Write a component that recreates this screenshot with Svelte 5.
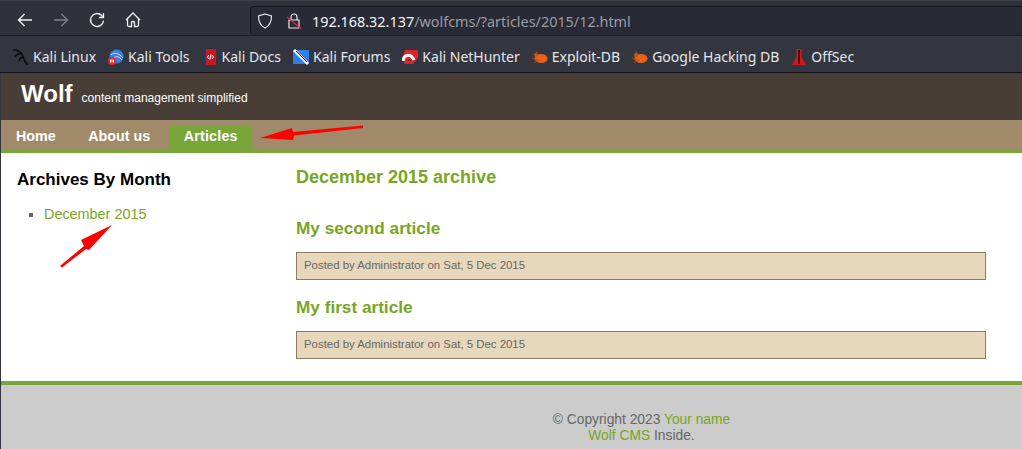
<script lang="ts">
	const posts = ['My second article', 'My first article'];
</script>

<div class="window">
	<div class="toolbar">
		<div class="nav-buttons">
			<svg viewBox="0 0 16 16" class="tb"><path d="M15 8H1.500M7.500 2 1.500 8l6 6" /></svg>
			<svg viewBox="0 0 16 16" class="tb off"><path d="M1 8h13.500M8.500 2l6 6-6 6" /></svg>
			<svg viewBox="0 0 16 16" class="tb"><path d="M14.500 8.500a6.500 6.500 0 1 1-2-5.200L14.500 5.500M14.500 1v4.500H10" /></svg>
			<svg viewBox="0 0 16 16" class="tb"><path d="M1 8 8 1 15 8M2.500 6.500V13a1.500 1.500 0 0 0 1.500 1.500h2.500V10.500a1 1 0 0 1 1-1h1a1 1 0 0 1 1 1v4H12a1.500 1.500 0 0 0 1.500-1.500V6.500" /></svg>
		</div>
		<div class="urlbar">
			<svg viewBox="0 0 16 16" class="ub"><path d="M8 1 14.500 3C14.500 9 12.500 12.800 8 15 3.500 12.800 1.500 9 1.500 3Z" /></svg>
			<svg viewBox="0 0 16 16" class="ub lock">
				<path d="M5 7V4a3 3 0 0 1 6 0V7M3 7h10v8H3Z" />
				<path class="slash" d="M1 4 15 15.500" />
			</svg>
			<span class="url"><b>192.168.32.137</b>/wolfcms/?articles/2015/12.html</span>
		</div>
	</div>

	<div class="bookmarks">
		<span class="bm">
			<svg viewBox="0 0 16 16"><path class="kali" d="M0 1C5 1 8 3 9.500 6 11 9 10 12 15 16M9 5C7 4 3 5 2 8M10 8.500C8 8 6 9.500 7 12" /></svg>
			Kali Linux
		</span>
		<span class="bm">
			<svg viewBox="0 0 16 16"><circle cx="8.500" cy="7.500" r="7" fill="#3b7de0" /><path d="M3 6C6 3 11 4 15 9M6 9c2-2 5-2 8 2" stroke="#cfe0fa" fill="none" /><circle cx="4" cy="12" r="4" fill="#e8262c" /><path d="M2.500 10.500v3M4 10.500v3M5.500 10.500v3" stroke="#fff" /></svg>
			Kali Tools
		</span>
		<span class="bm">
			<svg viewBox="0 0 16 16"><rect x="2" y="0" width="12" height="16" fill="#c8171d" /><rect x="2" y="0" width="2" height="16" fill="#23366e" /><path d="M7 6 5.500 8 7 10M10 6l1.500 2L10 10M9 5.500 8 10.500" stroke="#fff" fill="none" /></svg>
			Kali Docs
		</span>
		<span class="bm">
			<svg viewBox="0 0 16 16"><rect x="0" y="1" width="16" height="14" rx="1" fill="#2f80e4" /><path d="M1 1 15 15" stroke="#fff" stroke-width="3" /><path d="M3 2 14 13" stroke="#27303a" /></svg>
			Kali Forums
		</span>
		<span class="bm">
			<svg viewBox="0 0 16 16"><path d="M3 1H16V9L11 15H3L0 9Z" fill="#d8262c" /><path d="M1 12C2 5 9 4 12 11" stroke="#fff" stroke-width="3" fill="none" /><path d="M6 12c1-1.500 2-1.500 3 0" stroke="#27303a" fill="none" /></svg>
			Kali NetHunter
		</span>
		<span class="bm">
			<svg viewBox="0 0 16 16"><ellipse cx="9" cy="9.500" rx="6.500" ry="4.500" fill="#e8621a" /><circle cx="4" cy="6" r="2" fill="#c9541a" /><path d="M0 9 5 11M2 14 7 11M4 2 6 6" stroke="#a8481a" /></svg>
			Exploit-DB
		</span>
		<span class="bm">
			<svg viewBox="0 0 16 16"><ellipse cx="9" cy="9.500" rx="6.500" ry="4.500" fill="#e8621a" /><circle cx="4" cy="6" r="2" fill="#c9541a" /><path d="M0 9 5 11M2 14 7 11M4 2 6 6" stroke="#a8481a" /></svg>
			Google Hacking DB
		</span>
		<span class="bm">
			<svg viewBox="0 0 16 16"><path d="M5.500 0H10.500V8L15 16H1L5.500 8Z" fill="#d0191f" /><path d="M8 1V15" stroke="#3a0608" stroke-width="1.800" /></svg>
			OffSec
		</span>
	</div>

	<div class="page">
		<header class="site-header">
			<h1>Wolf</h1>
			<span class="tagline">content management simplified</span>
		</header>

		<nav class="site-nav">
			<a href="#home">Home</a>
			<a href="#about">About us</a>
			<a href="#articles" class="current">Articles</a>
		</nav>

		<main class="content">
			<aside class="sidebar">
				<h3>Archives By Month</h3>
				<ul>
					<li><a href="#dec">December 2015</a></li>
				</ul>
			</aside>
			<section class="articles">
				<h2>December 2015 archive</h2>
				{#each posts as post}
					<h3><a href="#post">{post}</a></h3>
					<p class="info">Posted by Administrator on Sat, 5 Dec 2015</p>
				{/each}
			</section>
		</main>

		<footer class="site-footer">
			<p>© Copyright 2023 <a href="#you">Your name</a><br /><a href="#wolf">Wolf CMS</a> Inside.</p>
		</footer>
	</div>

	<!-- hand-drawn annotations on top of the page -->
	<svg class="annotations" viewBox="0 0 1022 449">
		<path d="M260 138 292 128 293 132 363 125.500 363 128 294 135.500 293 140Z" />
		<path d="M112 225 81 240 84 246 60 266 62 267.500 86 249 89 250Z" />
	</svg>
</div>

<style>
	:global(body) {
		margin: 0;
	}
	.window {
		position: relative;
		width: 1022px;
		height: 449px;
		overflow: hidden;
		background: #33363f;
		font-family: "Liberation Sans", Arial, sans-serif;
	}
	.toolbar {
		display: flex;
		align-items: center;
		height: 36px;
		box-sizing: border-box;
		padding: 4px 0 0 17px;
		border-top: 1px solid #3f424b;
		border-bottom: 1px solid #1a1b21;
		background: #2f323b;
	}
	.nav-buttons {
		display: flex;
		gap: 20px;
		width: 233px;
	}
	.tb {
		width: 16px;
		height: 16px;
		fill: none;
		stroke: #f3f3f5;
		stroke-width: 1.300;
	}
	.tb.off {
		stroke: #7d7f85;
	}
	.urlbar {
		flex: 1;
		display: flex;
		align-items: center;
		align-self: stretch;
		margin-top: 1px;
		padding-left: 6px;
		background: #282a36;
		border: 1px solid #16171c;
		border-right: 0;
		border-bottom: 0;
		border-radius: 4px 0 0 4px;
		color: #9a9ca3;
		font: 14.400px "Noto Sans", sans-serif;
	}
	.urlbar b {
		font-weight: 400;
		color: #f4f4f6;
	}
	.ub {
		width: 16px;
		height: 16px;
		margin-right: 13px;
		fill: none;
		stroke: #e8e8ea;
		stroke-width: 1.200;
	}
	.slash {
		stroke: #e0254a;
	}
	.url {
		margin-left: -3px;
	}
	.bookmarks {
		display: flex;
		align-items: center;
		gap: 12px;
		height: 37px;
		padding: 5px 0 0 13px;
		box-sizing: border-box;
		background: #33363f;
		border-bottom: 1px solid #15161a;
		color: #e4e6ea;
		font: 14px "Noto Sans", sans-serif;
	}
	.bm {
		display: flex;
		align-items: center;
		gap: 4px;
		white-space: nowrap;
	}
	.bm svg {
		width: 16px;
		height: 16px;
	}
	.kali {
		fill: none;
		stroke: #0c0c0e;
		stroke-width: 1.600;
	}
	.page {
		height: 376px;
		margin-left: 1px;
		display: flex;
		flex-direction: column;
		background: #fff;
	}
	.site-header {
		display: flex;
		align-items: baseline;
		gap: 10px;
		height: 47px;
		box-sizing: border-box;
		padding: 7px 0 0 20px;
		background: #493d38;
		color: #fff;
	}
	.site-header h1 {
		margin: 0;
		font-size: 24px;
		line-height: 28px;
	}
	.tagline {
		font-size: 12px;
		margin-left: -1px;
	}
	.site-nav {
		display: flex;
		align-items: flex-end;
		gap: 4.500px;
		height: 33px;
		box-sizing: border-box;
		padding-left: 1px;
		background: #a08a69;
		border-bottom: 3px solid #78a639;
	}
	.site-nav a {
		padding: 0 14px 4px;
		line-height: 20px;
		color: #fff;
		font-size: 14.300px;
		font-weight: 700;
		text-decoration: none;
	}
	.site-nav a.current {
		padding: 0 14.500px 4px 15px;
		letter-spacing: 0.200px;
		background: #78a639;
	}
	.content {
		flex: 1;
		display: flex;
		padding: 0 36px 0 16px;
	}
	a {
		color: #78a61f;
		text-decoration: none;
	}
	.sidebar {
		width: 279px;
	}
	.sidebar h3 {
		margin: 17px 0 16px;
		font-size: 17px;
		line-height: 20px;
		color: #000;
	}
	.sidebar ul {
		margin: 0;
		padding-left: 27px;
		list-style: square;
		color: #666;
		font-size: 14.400px;
	}
	.articles {
		flex: 1;
	}
	.articles h2 {
		margin: 14px 0 31px;
		font-size: 18px;
		line-height: 20px;
		color: #78a61f;
	}
	.articles h3 {
		margin: 0 0 14px;
		font-size: 17.200px;
		line-height: 20px;
	}
	.info {
		margin: 0 0 17px;
		padding: 0 7px 2px;
		line-height: 24px;
		font-size: 11.400px;
		color: #666;
		background: #e8d8bb;
		border: 1px solid #8f7a5c;
	}
	.site-footer {
		height: 68px;
		box-sizing: border-box;
		padding-top: 27px;
		border-top: 4px solid #78a639;
		background: #ccc;
		color: #666;
		font-size: 13.800px;
		line-height: 16px;
		text-align: center;
	}
	.site-footer p {
		margin: 0 0 0 260px;
	}
	.annotations {
		position: absolute;
		inset: 0;
		pointer-events: none;
	}
	.annotations path {
		fill: #f00;
	}
</style>
